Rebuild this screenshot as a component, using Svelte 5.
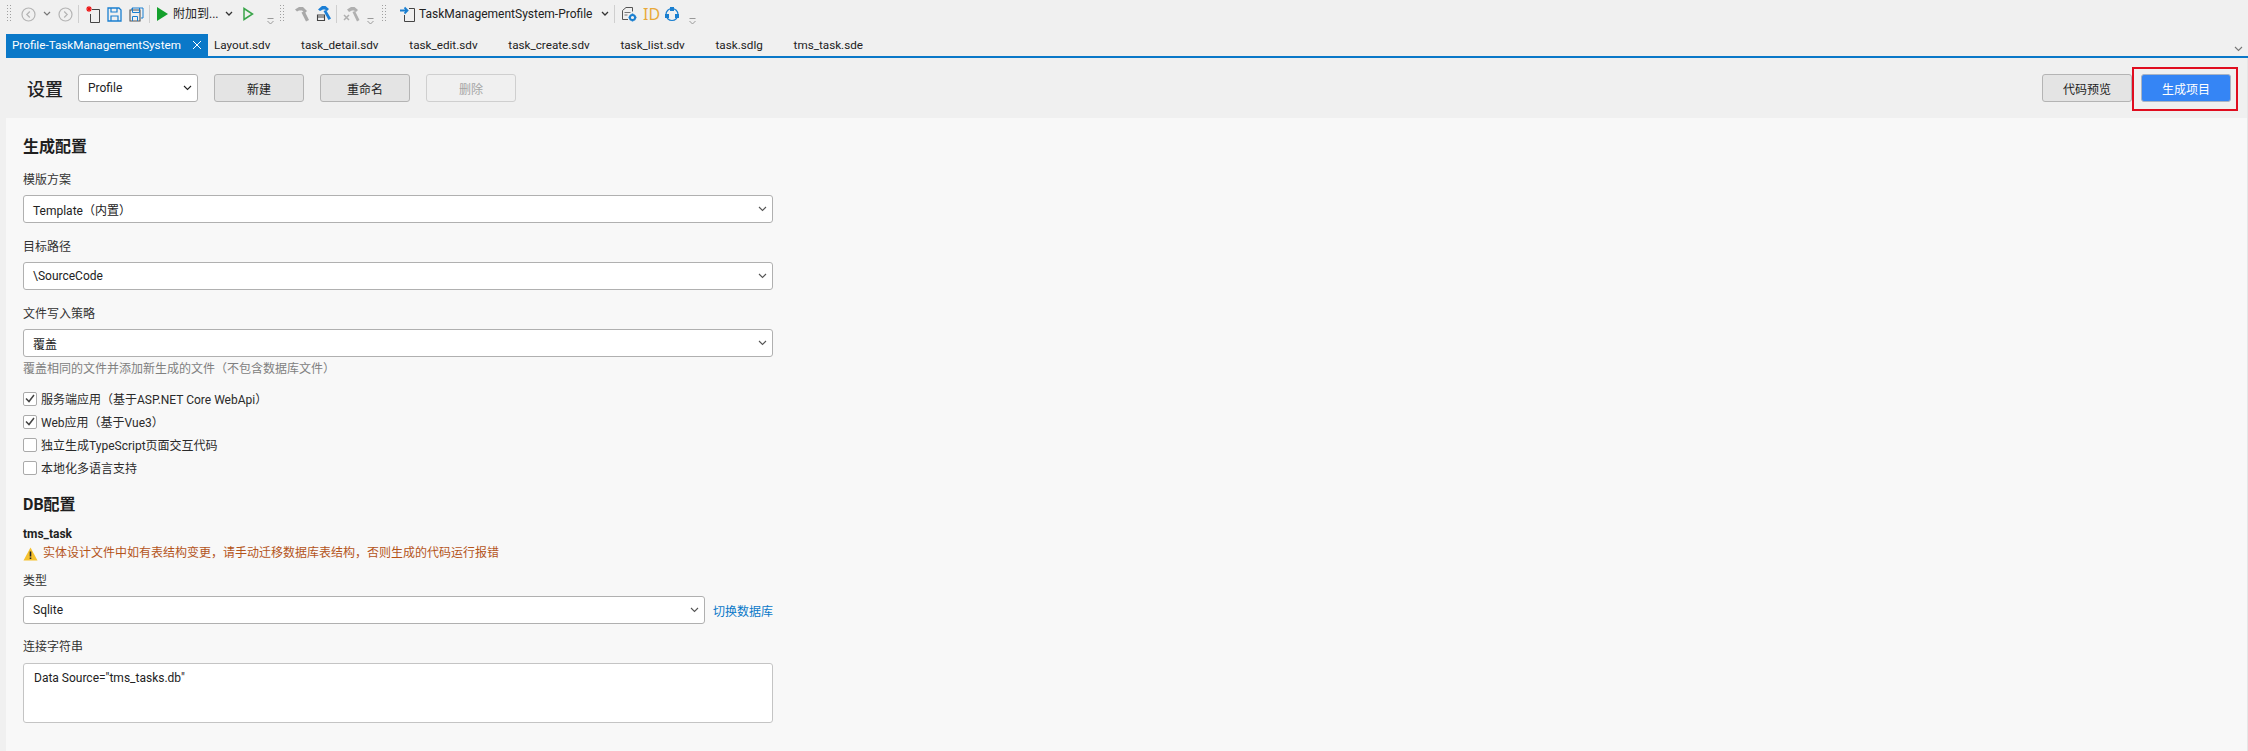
<script>
  const tabs = ["Layout.sdv", "task_detail.sdv", "task_edit.sdv", "task_create.sdv", "task_list.sdv", "task.sdlg", "tms_task.sde"];
  const options = [
    { label: "服务端应用（基于ASP.NET Core WebApi）", checked: true },
    { label: "Web应用（基于Vue3）", checked: true },
    { label: "独立生成TypeScript页面交互代码", checked: false },
    { label: "本地化多语言支持", checked: false }
  ];
</script>

{#snippet chevron(color = "#555")}
  <svg class="chev" width="9" height="6" viewBox="0 0 9 6"><path d="M1 1l3.5 3.5L8 1" fill="none" stroke={color} stroke-width="1.1"/></svg>
{/snippet}
{#snippet overflow()}
  <svg class="ovf" width="7" height="8" viewBox="0 0 7 8"><path d="M0.5 1.5h6M0.5 4l3 3 3-3" fill="none" stroke="#999" stroke-width="1"/></svg>
{/snippet}

<div class="app">
  <div class="toolbar">
    <span class="grip first"></span>
    <svg class="i-back" width="15" height="15" viewBox="0 0 15 15"><circle cx="7.5" cy="7.5" r="6.5" fill="none" stroke="#b4b4b4" stroke-width="1.2"/><path d="M8.8 4.5l-3 3 3 3" fill="none" stroke="#b4b4b4" stroke-width="1.2"/></svg>
    <svg class="i-dd" width="8" height="6" viewBox="0 0 8 6"><path d="M1 1l3 3 3-3" fill="none" stroke="#777" stroke-width="1.2"/></svg>
    <svg class="i-fwd" width="15" height="15" viewBox="0 0 15 15"><circle cx="7.5" cy="7.5" r="6.5" fill="none" stroke="#b4b4b4" stroke-width="1.2"/><path d="M6.2 4.5l3 3-3 3" fill="none" stroke="#b4b4b4" stroke-width="1.2"/></svg>
    <span class="sep s1"></span>
    <svg class="i-new" width="16" height="18" viewBox="0 0 16 18"><path d="M7 4.5h7.5v13H5.5V9" fill="none" stroke="#444"/><path d="M4 1v6M1 4h6M2 2l4 4M6 2L2 6" stroke="#e11" stroke-width="1.1"/></svg>
    <svg class="i-save" width="15" height="15" viewBox="0 0 15 15"><path d="M1 1h11l2 2v11H1z" fill="none" stroke="#1a7fd0" stroke-width="1.3"/><path d="M4 1v4h6V1M4 14V9h7v5" fill="none" stroke="#1a7fd0" stroke-width="1.2"/></svg>
    <svg class="i-saveall" width="15" height="15" viewBox="0 0 15 15"><path d="M3 3V1h11v10h-2" fill="none" stroke="#1a7fd0"/><path d="M1 3h10v11H1z" fill="none" stroke="#555" stroke-width="1.1"/><path d="M3.5 1v4.5h7V1M3.5 14V9.5h5V14" fill="none" stroke="#1a7fd0"/></svg>
    <span class="sep s2"></span>
    <svg class="i-play" width="11" height="14" viewBox="0 0 11 14"><path d="M0 0l11 7-11 7z" fill="#14a02c"/></svg>
    <span class="tb-text attach">附加到...</span>
    <svg class="i-dd2" width="8" height="6" viewBox="0 0 8 6"><path d="M1 1l3 3 3-3" fill="none" stroke="#333" stroke-width="1.3"/></svg>
    <svg class="i-play2" width="11" height="14" viewBox="0 0 11 14"><path d="M1 1.5L9.5 7 1 12.5z" fill="none" stroke="#3aa54a" stroke-width="1.5"/></svg>
    <span class="ovf-slot a">{@render overflow()}</span>
    <span class="grip g2"></span>
    <svg class="h1" width="16" height="16" viewBox="0 0 16 16"><path d="M0 3.5L4 1h4l4 4-2 2-3-2.5H4L2 5.5zM6.5 6.5L9.5 5l4.5 9-3 1.5z" fill="#a9a9a9"/></svg>
    <svg class="h2" width="16" height="16" viewBox="0 0 16 16"><path d="M2 3.5L6 0h3.5L13 3l-2 2-2-1.5H7L4 5zM7.5 5L10 4l5 8.5-2.5 1.5z" fill="#1b7fd6"/><path d="M1.5 9h7v5.5h-7zM1.5 11h7" fill="none" stroke="#444" stroke-width="1.1"/></svg>
    <span class="sep s3"></span>
    <svg class="h3" width="18" height="16" viewBox="0 0 18 16"><path d="M4 3.5L8 1h3.5L15 4l-2 2-2-1.5H9L6 6zM9.5 6l2.5-1 4.5 9-2.5 1.5z" fill="#b0b0b0"/><path d="M1 9l5 5M6 9l-5 5" stroke="#b0b0b0" stroke-width="1.5"/></svg>
    <span class="ovf-slot b">{@render overflow()}</span>
    <span class="grip g3"></span>
    <svg class="i-proj" width="16" height="16" viewBox="0 0 16 16"><path d="M9 2.5h5.5v13H4.5V9" fill="none" stroke="#444"/><path d="M0 4.5h7M4.5 1.5L7.500 4.500 4.500 7.500" fill="none" stroke="#1a7fd0" stroke-width="1.8"/></svg>
    <span class="tb-text profile">TaskManagementSystem-Profile</span>
    <svg class="i-dd3" width="8" height="6" viewBox="0 0 8 6"><path d="M1 1l3 3 3-3" fill="none" stroke="#333" stroke-width="1.3"/></svg>
    <span class="sep s4"></span>
    <svg class="i-doc" width="16" height="16" viewBox="0 0 16 16"><path d="M5 1.5h6.5v4M5 1.5L1.5 4.5v9H7" fill="none" stroke="#555"/><path d="M3.5 6.5h6M3.5 9h3" stroke="#777"/><circle cx="11.5" cy="11.5" r="2.6" fill="none" stroke="#1a7fd0" stroke-width="2"/><path d="M11.5 7.5V9M11.5 14v1.500M7.500 11.500H9M14 11.500h1.500" stroke="#1a7fd0" stroke-width="1.5"/></svg>
    <span class="id">ID</span>
    <svg class="i-cycle" width="16" height="16" viewBox="0 0 16 16"><circle cx="8" cy="8.5" r="6" fill="none" stroke="#1a7fd0" stroke-width="1.2"/><rect x="6" y="1" width="4" height="4" fill="#1a7fd0"/><rect x="1" y="8" width="4" height="4" fill="#1a7fd0"/><rect x="11" y="8" width="4" height="4" fill="#1a7fd0"/></svg>
    <span class="ovf-slot c">{@render overflow()}</span>
  </div>

  <div class="tabbar">
    <div class="tab active">
      <span>Profile-TaskManagementSystem</span>
      <svg width="10" height="10" viewBox="0 0 10 10"><path d="M1 1l8 8M9 1l-8 8" stroke="#fff" stroke-width="1"/></svg>
    </div>
    {#each tabs as tab}
      <div class="tab">{tab}</div>
    {/each}
    <span class="tab-more">{@render chevron("#777")}</span>
  </div>

  <div class="page">
    <header class="head">
      <h1>设置</h1>
      <div class="select small"><span>Profile</span>{@render chevron("#222")}</div>
      <button>新建</button>
      <button>重命名</button>
      <button disabled>删除</button>
      <div class="right">
        <button>代码预览</button>
        <button class="primary">生成项目</button>
        <span class="red-box"></span>
      </div>
    </header>

    <main class="form">
      <h2>生成配置</h2>
      <div class="label">模版方案</div>
      <div class="select"><span>Template（内置）</span>{@render chevron()}</div>
      <div class="label">目标路径</div>
      <div class="select"><span>\SourceCode</span>{@render chevron()}</div>
      <div class="label">文件写入策略</div>
      <div class="select"><span>覆盖</span>{@render chevron()}</div>
      <div class="hint">覆盖相同的文件并添加新生成的文件（不包含数据库文件）</div>

      <div class="checks">
        {#each options as opt}
          <div class="check">
            <span class="box">
              {#if opt.checked}
                <svg width="10" height="9" viewBox="0 0 10 9"><path d="M1 4.5l3 3 5-6.5" fill="none" stroke="#444" stroke-width="1.5"/></svg>
              {/if}
            </span>
            {opt.label}
          </div>
        {/each}
      </div>

      <h2 class="db">DB配置</h2>
      <div class="entity">tms_task</div>
      <div class="warn">
        <svg width="15" height="14" viewBox="0 0 15 14"><path d="M7.5 0.5l7 13H0.5z" fill="#f5c12e"/><path d="M7.5 4.5v5M7.5 10.5v1.6" stroke="#222" stroke-width="1.6"/></svg>
        实体设计文件中如有表结构变更，请手动迁移数据库表结构，否则生成的代码运行报错
      </div>
      <div class="label type">类型</div>
      <div class="db-row">
        <div class="select"><span>Sqlite</span>{@render chevron()}</div>
        <span class="link">切换数据库</span>
      </div>
      <div class="label conn">连接字符串</div>
      <div class="textarea">Data Source="tms_tasks.db"</div>
    </main>
  </div>
</div>

<style>
  :global(body) {
    margin: 0;
    background: #f0f0f0;
  }
  .app {
    width: 2248px;
    height: 751px;
    overflow: hidden;
    font-family: Roboto, "Noto Sans CJK SC", sans-serif;
    font-size: 12px;
    color: #222;
  }
  .toolbar {
    height: 34px;
    display: flex;
    align-items: center;
    padding: 0 0 6px 7px;
    box-sizing: border-box;
  }
  .toolbar > * { flex: none; }
  .grip {
    width: 5px;
    height: 18px;
    background: radial-gradient(circle at 0.5px 0.5px, #a0a0a0 0.6px, transparent 0.7px) 0 0 / 3px 3px;
  }
  .sep { width: 1px; height: 18px; background: #cfcfcf; }
  .i-back { margin-left: 9px; }
  .i-dd { margin-left: 7px; }
  .i-fwd { margin-left: 7px; }
  .s1 { margin-left: 5px; }
  .i-new { margin-left: 6px; }
  .i-save { margin-left: 6px; }
  .i-saveall { margin-left: 7px; }
  .s2 { margin-left: 5px; }
  .i-play { margin-left: 7px; }
  .tb-text { font-size: 12px; line-height: 16px; white-space: nowrap; }
  .attach { margin-left: 5px; width: 45px; }
  .i-dd2 { margin-left: 7px; }
  .i-play2 { margin-left: 10px; }
  .ovf-slot { display: flex; height: 12px; align-items: flex-end; margin-top: 10px; }
  .ovf-slot.a { margin-left: 13px; }
  .g2 { margin-left: 6px; }
  .h1 { margin-left: 10px; }
  .h2 { margin-left: 5px; }
  .s3 { margin-left: 4px; }
  .h3 { margin-left: 6px; }
  .ovf-slot.b { margin-left: 6px; }
  .g3 { margin-left: 8px; }
  .i-proj { margin-left: 13px; }
  .profile { margin-left: 3px; width: 170px; }
  .i-dd3 { margin-left: 12px; }
  .s4 { margin-left: 5px; }
  .i-doc { margin-left: 6px; }
  .id { margin-left: 6px; color: #e8a93a; font-family: "Noto Sans", sans-serif; font-size: 16px; width: 15px; line-height: 18px; }
  .i-cycle { margin-left: 6px; }
  .ovf-slot.c { margin-left: 9px; }

  .tabbar {
    height: 24px;
    margin-left: 6px;
    display: flex;
    position: relative;
    border-bottom: 2px solid #0a78c8;
    box-sizing: border-box;
  }
  .tab {
    height: 22px;
    padding: 0 15.4px;
    display: flex;
    align-items: center;
    white-space: nowrap;
    font-size: 11.7px;
  }
  .tab.active {
    width: 202px;
    box-sizing: border-box;
    padding: 0 6px;
    justify-content: space-between;
    background: #0a78c8;
    color: #fff;
  }
  .tab-more { position: absolute; right: 5px; top: 7px; }
  .tab.active + .tab { padding-left: 6px; }

  .page {
    margin-left: 6px;
    border-right: 1px solid #e6e6e6;
    height: 693px;
    box-sizing: border-box;
    background: #f8f8f8;
  }
  .head {
    height: 60px;
    background: #f0f0f0;
    display: flex;
    align-items: center;
    padding: 0 16px 0 21px;
    gap: 16px;
    box-sizing: border-box;
  }
  h1 {
    margin: 0 -1px 0 0;
    font-size: 18px;
    font-weight: 500;
    width: 36px;
  }
  button {
    width: 90px;
    height: 28px;
    padding: 0;
    border: 1px solid #b4b4b4;
    border-radius: 3px;
    background: #e4e4e4;
    font: inherit;
    color: #222;
  }
  button:disabled {
    background: #f0f0f0;
    border-color: #cfcfcf;
    color: #a5a5a5;
  }
  .right {
    margin-left: auto;
    display: flex;
    gap: 9px;
    position: relative;
  }
  .primary {
    background: #3585f5;
    border-color: #a9b4c4;
    color: #fff;
  }
  .red-box {
    position: absolute;
    right: -7px;
    top: -7px;
    width: 106px;
    height: 44px;
    box-sizing: border-box;
    border: 2px solid #e00d1f;
    pointer-events: none;
  }

  .select {
    height: 28px;
    width: 750px;
    box-sizing: border-box;
    background: #fff;
    border: 1px solid #b0b0b0;
    border-radius: 3px;
    display: flex;
    align-items: center;
    justify-content: space-between;
    padding: 0 5px 0 9px;
    color: #222;
  }
  .select.small { width: 120px; }
  .form {
    padding: 19px 0 0 17px;
    width: 750px;
  }
  h2 {
    margin: 0;
    font-size: 16px;
    line-height: 20px;
    font-weight: 700;
    color: #1f1f1f;
  }
  .label {
    margin-top: 15px;
    margin-bottom: 6px;
    line-height: 17px;
    color: #333;
  }
  .select + .label { margin-top: 16px; }
  .hint {
    margin-top: 4px;
    line-height: 17px;
    color: #808080;
  }
  .checks { margin-top: 9px; }
  .check {
    height: 23px;
    display: flex;
    align-items: center;
    gap: 4px;
    color: #2a2a2a;
  }
  .box {
    width: 14px;
    height: 14px;
    box-sizing: border-box;
    border: 1px solid #aaa;
    border-radius: 2px;
    background: #fff;
    display: flex;
    align-items: center;
    justify-content: center;
  }
  h2.db { margin-top: 16px; }
  .entity {
    margin-top: 11px;
    font-weight: 700;
    line-height: 17px;
    color: #1f1f1f;
  }
  .warn {
    margin-top: 2px;
    display: flex;
    align-items: center;
    gap: 5px;
    line-height: 17px;
    color: #b4541a;
  }
  .label.type { margin-top: 11px; }
  .db-row {
    display: flex;
    align-items: center;
    gap: 8px;
  }
  .db-row .select { width: 682px; }
  .link { color: #0a78c8; white-space: nowrap; }
  .label.conn { margin-top: 15px; margin-bottom: 7px; }
  .textarea {
    height: 60px;
    box-sizing: border-box;
    background: #fff;
    border: 1px solid #c4c4c4;
    border-radius: 3px;
    padding: 6px 10px;
    line-height: 17px;
  }
</style>
